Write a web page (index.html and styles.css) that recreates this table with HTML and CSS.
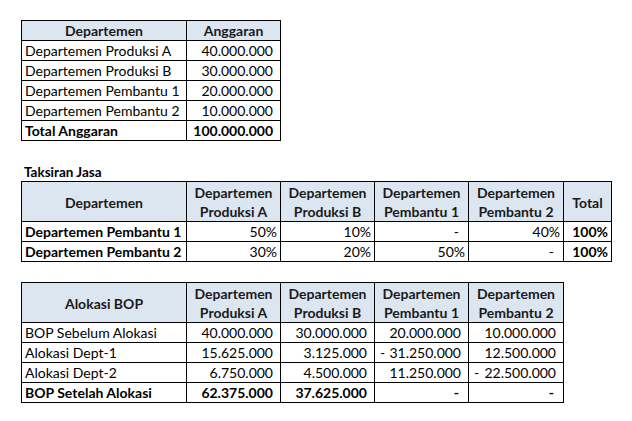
FILE: index.html
```html
<!DOCTYPE html>
<html>
<head>
<meta charset="utf-8">
<link rel="stylesheet" href="styles.css">
</head>
<body>
<div class="sheet">
  <table class="grid t1">
    <colgroup><col class="c-name"><col class="c-num"></colgroup>
    <tr class="head"><th>Departemen</th><th>Anggaran</th></tr>
    <tr><td>Departemen Produksi A</td><td class="num">40.000.000</td></tr>
    <tr><td>Departemen Produksi B</td><td class="num">30.000.000</td></tr>
    <tr><td>Departemen Pembantu 1</td><td class="num">20.000.000</td></tr>
    <tr><td>Departemen Pembantu 2</td><td class="num">10.000.000</td></tr>
    <tr class="bold"><td>Total Anggaran</td><td class="num">100.000.000</td></tr>
  </table>

  <div class="caption">Taksiran Jasa</div>
  <table class="grid t2">
    <colgroup><col class="c-name"><col class="c-num"><col class="c-num"><col class="c-num"><col class="c-num5"><col class="c-total"></colgroup>
    <tr class="head tall"><th>Departemen</th><th>Departemen<br>Produksi A</th><th>Departemen<br>Produksi B</th><th>Departemen<br>Pembantu 1</th><th>Departemen<br>Pembantu 2</th><th>Total</th></tr>
    <tr><td class="b">Departemen Pembantu 1</td><td class="pct">50%</td><td class="pct">10%</td><td class="dash">-</td><td class="pct">40%</td><td class="pct b">100%</td></tr>
    <tr><td class="b">Departemen Pembantu 2</td><td class="pct">30%</td><td class="pct">20%</td><td class="pct">50%</td><td class="dash">-</td><td class="pct b">100%</td></tr>
  </table>

  <table class="grid t3">
    <colgroup><col class="c-name"><col class="c-num"><col class="c-num"><col class="c-num"><col class="c-num5"></colgroup>
    <tr class="head tall"><th>Alokasi BOP</th><th>Departemen<br>Produksi A</th><th>Departemen<br>Produksi B</th><th>Departemen<br>Pembantu 1</th><th>Departemen<br>Pembantu 2</th></tr>
    <tr><td>BOP Sebelum Alokasi</td><td class="num">40.000.000</td><td class="num">30.000.000</td><td class="num">20.000.000</td><td class="num">10.000.000</td></tr>
    <tr><td>Alokasi Dept-1</td><td class="num">15.625.000</td><td class="num">3.125.000</td><td class="num neg"><span class="minus">-</span>31.250.000</td><td class="num">12.500.000</td></tr>
    <tr><td>Alokasi Dept-2</td><td class="num">6.750.000</td><td class="num">4.500.000</td><td class="num">11.250.000</td><td class="num neg"><span class="minus">-</span>22.500.000</td></tr>
    <tr class="bold"><td>BOP Setelah Alokasi</td><td class="num">62.375.000</td><td class="num">37.625.000</td><td class="dash">-</td><td class="dash">-</td></tr>
  </table>
</div>
</body>
</html>
```

FILE: styles.css
```css
html, body {
  margin: 0;
  padding: 0;
  background: #ffffff;
}

body {
  font-family: Lato, "Open Sans", sans-serif;
  font-size: 14px;
  color: #000000;
}

.sheet {
  padding: 20px 0 0 21px;
  display: flex;
  flex-direction: column;
  align-items: flex-start;
}

.grid {
  border-collapse: collapse;
  table-layout: fixed;
}

.grid th,
.grid td {
  border: 1px solid #000000;
  height: 18px;
  padding: 1px 3px 0 3px;
  line-height: 18px;
  white-space: nowrap;
  overflow: hidden;
}

.grid .head th {
  background: #dce6f1;
  font-weight: bold;
  text-align: center;
  color: #1a1a1a;
}

.grid .tall th {
  height: 38px;
  line-height: 19px;
  padding-top: 1px;
}

.c-name { width: 165px; }
.c-num { width: 94px; }
.c-num5 { width: 95px; }
.c-total { width: 48px; }

.t1 { width: 260px; }
.t2 { width: 591px; }
.t3 { width: 543px; }

.num {
  text-align: right;
  padding-right: 7px !important;
}

.pct {
  text-align: right;
}

.dash {
  text-align: right;
  padding-right: 9px !important;
}

.bold td,
.b {
  font-weight: bold;
}

.neg {
  position: relative;
}

.minus {
  position: absolute;
  left: 5px;
}

.caption {
  font-weight: bold;
  font-size: 13.5px;
  margin-top: 20px;
  padding-left: 3px;
  height: 20px;
  line-height: 22px;
}

.t3 {
  margin-top: 20px;
}
```
